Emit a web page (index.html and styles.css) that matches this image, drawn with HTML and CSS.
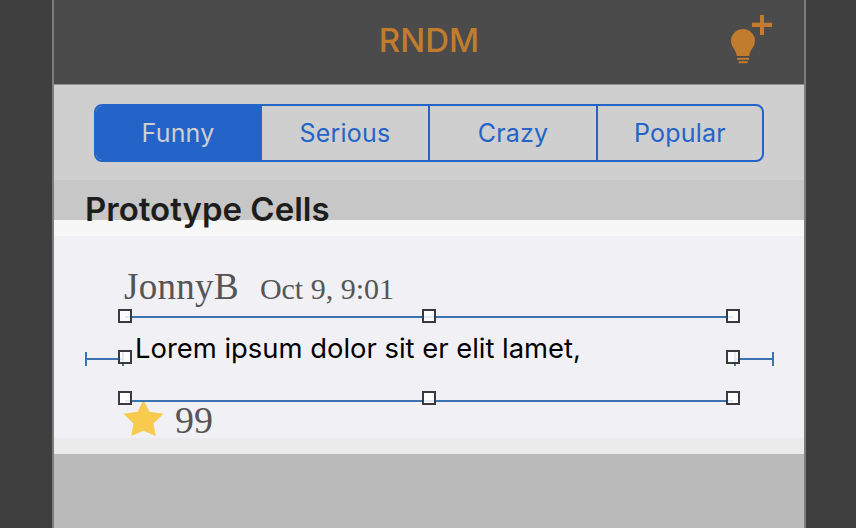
FILE: index.html
```html
<!DOCTYPE html>
<html>
<head>
  <title>RNDM</title>
  <link rel="stylesheet" href="styles.css">
</head>
<body>
  <div class="screen">
    <header class="navbar">
      <h1 class="nav-title">RNDM</h1>
      <svg class="nav-icon" width="44" height="52" viewBox="0 0 44 52">
        <!-- lightbulb -->
        <path d="M13 14c-6.600 0-12 5.200-12 11.700 0 3.100 1.100 5.200 2.800 7.900 1.400 2.300 2.500 4.400 3 7.400h12.400c.5-3 1.600-5.100 3-7.400 1.700-2.700 2.800-4.800 2.800-7.900C25 19.200 19.600 14 13 14z" fill="#c27c2e"/>
        <rect x="7" y="42.800" width="12" height="2" fill="#c27c2e"/>
        <rect x="8.700" y="46.200" width="9" height="2" fill="#c27c2e"/>
        <!-- plus -->
        <rect x="22" y="7.700" width="20" height="4.300" fill="#c27c2e"/>
        <rect x="30" y="0" width="4" height="20" fill="#c27c2e"/>
      </svg>
    </header>

    <div class="segment-bar">
      <div class="segments">
        <div class="segment active">Funny</div>
        <div class="segment">Serious</div>
        <div class="segment">Crazy</div>
        <div class="segment">Popular</div>
      </div>
    </div>

    <div class="section-header">Prototype Cells</div>
    <div class="band-top"></div>

    <div class="cell">
      <div class="cell-head">
        <span class="username">JonnyB</span>
        <span class="timestamp">Oct 9, 9:01</span>
      </div>
      <p class="cell-text">Lorem ipsum dolor sit er elit lamet,</p>
      <div class="cell-foot">
        <svg class="star" width="41" height="36" viewBox="0 0 42 38" preserveAspectRatio="none">
          <path d="M21 0l6 12.500 14.500 2-10.300 10.300 2.300 13.200-12.500-5.500-12.500 5.500 2.300-13.200L.5 14.500l14.500-2z" fill="#f8cb4e"/>
        </svg>
        <span class="likes">99</span>
      </div>

      <!-- selection guides -->
      <div class="guide guide-top"></div>
      <div class="guide guide-bottom"></div>
      <div class="strut strut-left"></div>
      <div class="strut strut-right"></div>

      <div class="handle h-tl"></div>
      <div class="handle h-tc"></div>
      <div class="handle h-tr"></div>
      <div class="handle h-ml"></div>
      <div class="handle h-mr"></div>
      <div class="handle h-bl"></div>
      <div class="handle h-bc"></div>
      <div class="handle h-br"></div>
    </div>
    <div class="band-bottom"></div>
    <div class="empty"></div>
  </div>
</body>
</html>
```

FILE: styles.css
```css
html, body {
  height: 100%;
}
body {
  margin: 0;
  background: #3f3f3f;
  font-family: Inter, "Liberation Sans", sans-serif;
  overflow: hidden;
}
.screen {
  width: 750px;
  height: 528px;
  margin-left: 52px;
  border-left: 2px solid #7d7d7d;
  border-right: 2px solid #7d7d7d;
  display: flex;
  flex-direction: column;
}

/* Barra superior */
.navbar {
  height: 84px;
  flex: none;
  background: #4b4b4b;
  border-bottom: 1px solid #8f8f8f;
  position: relative;
  display: flex;
  align-items: center;
  justify-content: center;
}
.nav-title {
  margin: 0 0 4px;
  font-size: 33px;
  font-weight: 500;
  color: #c27c2e;
}
.nav-icon {
  position: absolute;
  left: 676px;
  top: 15px;
}

/* Control segmentado */
.segment-bar {
  height: 95px;
  flex: none;
  box-sizing: border-box;
  background: #cfcfcf;
  padding: 19px 40px 0;
}
.segments {
  display: grid;
  grid-template-columns: 164px 168px 168px 166px;
  height: 58px;
  box-sizing: border-box;
  border: 2px solid #2464c8;
  border-radius: 8px;
  overflow: hidden;
}
.segment {
  display: flex;
  align-items: center;
  justify-content: center;
  font-size: 25px;
  letter-spacing: 0.2px;
  color: #2464c8;
  border-left: 2px solid #2464c8;
}
.segment:first-child {
  border-left: none;
}
.segment.active {
  background: #2464c8;
  color: #cfcfcf;
}

.section-header {
  height: 40px;
  flex: none;
  box-sizing: border-box;
  background: #c7c7c7;
  padding-left: 31px;
  padding-top: 10px;
  font-size: 33px;
  line-height: 38px;
  font-weight: 600;
  color: #1d1d1d;
  position: relative;
  z-index: 1;
}
.band-top {
  height: 16px;
  flex: none;
  background: #f7f7f7;
}

/* Celda */
.cell {
  height: 202px;
  flex: none;
  box-sizing: border-box;
  background: #f0f0f5;
  position: relative;
  padding: 31px 0 0 70px;
}
.cell-head {
  display: flex;
  align-items: baseline;
  gap: 21px;
  height: 40px;
  line-height: 40px;
  font-family: "Liberation Serif", serif;
  color: #555;
}
.username {
  font-size: 37px;
  letter-spacing: 0.3px;
}
.timestamp {
  font-size: 30px;
}
.cell-text {
  margin: 23px 0 0 11px;
  font-size: 27.4px;
  line-height: 36px;
  color: #000;
}
.cell-foot {
  display: flex;
  align-items: center;
  gap: 11px;
  margin-top: 34px;
  margin-left: -1px;
  height: 36px;
}
.star {
  flex: none;
}
.likes {
  font-family: "Liberation Serif", serif;
  font-size: 38px;
  line-height: 40px;
  margin-top: 4px;
  color: #555;
}

.guide {
  position: absolute;
  left: 71px;
  width: 608px;
  height: 2px;
  background: #3c72b0;
}
.guide-top {
  top: 80px;
}
.guide-bottom {
  top: 164px;
}
.strut {
  position: absolute;
  top: 116px;
  height: 14px;
  box-sizing: border-box;
  border-left: 2px solid #3c72b0;
  border-right: 2px solid #3c72b0;
  background: linear-gradient(#3c72b0, #3c72b0) center / 100% 2px no-repeat;
}
.strut-left {
  left: 31px;
  width: 39px;
}
.strut-right {
  left: 680px;
  width: 40px;
}
.handle {
  position: absolute;
  width: 14px;
  height: 14px;
  box-sizing: border-box;
  border: 2px solid #3a3a3a;
  background: rgba(255,255,255,0.85);
}
.h-tl { left: 64px; top: 73px; }
.h-tc { left: 368px; top: 73px; }
.h-tr { left: 672px; top: 73px; }
.h-ml { left: 64px; top: 114px; }
.h-mr { left: 672px; top: 114px; }
.h-bl { left: 64px; top: 155px; }
.h-bc { left: 368px; top: 155px; }
.h-br { left: 672px; top: 155px; }

.band-bottom {
  height: 16px;
  flex: none;
  background: #ebebeb;
}
.empty {
  flex: 1;
  background: #bababa;
}
```
